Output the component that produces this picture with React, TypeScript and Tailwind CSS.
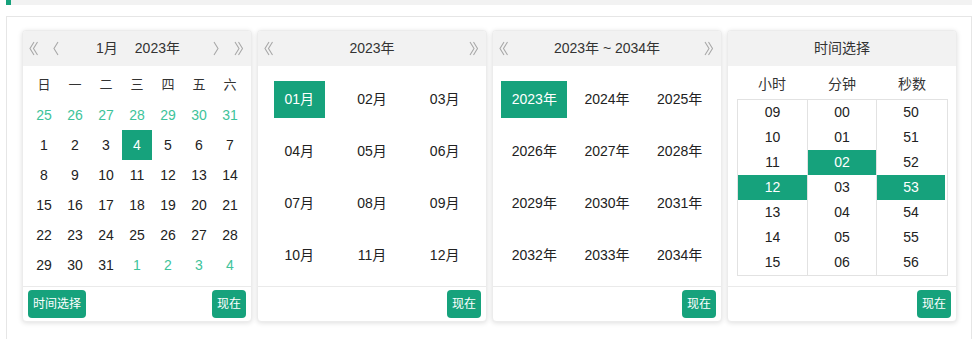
import React from "react";

const GREEN = "bg-[#16a27c]";

function Chev({ dir, double }: { dir: "l" | "r"; double?: boolean }) {
  const pts = (x: number) =>
    dir === "l" ? `${x + 4},1 ${x},7.5 ${x + 4},14` : `${x},1 ${x + 4},7.5 ${x},14`;
  return (
    <svg width={double ? 10 : 6} height="15" viewBox={double ? "0 0 10 15" : "0 0 6 15"} fill="none" stroke="#a8a8a8" strokeWidth="1.1">
      {double ? (
        <>
          <polyline points={pts(1)} />
          <polyline points={pts(4.5)} />
        </>
      ) : (
        <polyline points={pts(1)} />
      )}
    </svg>
  );
}

function Btn({ children }: { children: React.ReactNode }) {
  return (
    <div className={`${GREEN} h-[28px] px-[5px] rounded-[4px] text-white text-[12px] leading-[28px]`}>{children}</div>
  );
}

function Panel({
  header,
  children,
  footer,
}: {
  header: React.ReactNode;
  children: React.ReactNode;
  footer: React.ReactNode;
}) {
  return (
    <div className="w-[230px] h-[292px] shrink-0 bg-white rounded-[4px] border border-[#ececec] shadow-[0_1px_5px_rgba(0,0,0,0.13)] flex flex-col overflow-hidden">
      <div className="h-[35px] bg-[#f2f2f2] relative flex items-center justify-center text-[14px] text-[#333]">{header}</div>
      <div className="h-[220px]">{children}</div>
      <div className="h-[35px] border-t border-[#eaeaea] flex items-start justify-between pt-[3px] px-[5px]">{footer}</div>
    </div>
  );
}

const weekdays = ["日", "一", "二", "三", "四", "五", "六"];
const days: { n: number; other?: boolean; sel?: boolean }[] = [
  ...[25, 26, 27, 28, 29, 30, 31].map((n) => ({ n, other: true })),
  ...Array.from({ length: 31 }, (_, i) => ({ n: i + 1, sel: i + 1 === 4 })),
  ...[1, 2, 3, 4].map((n) => ({ n, other: true })),
];

function DatePanel() {
  return (
    <Panel
      header={
        <>
          <div className="absolute left-[6px] top-[10px] flex items-center gap-[14px]">
            <Chev dir="l" double />
            <Chev dir="l" />
          </div>
          <div className="flex gap-[17px] ml-[2px]">
            <span>1月</span>
            <span>2023年</span>
          </div>
          <div className="absolute right-[7px] top-[10px] flex items-center gap-[15px]">
            <Chev dir="r" />
            <Chev dir="r" double />
          </div>
        </>
      }
      footer={
        <>
          <Btn>时间选择</Btn>
          <Btn>现在</Btn>
        </>
      }
    >
      <div className="pt-[4px] flex justify-center">
        <div className="grid grid-cols-[repeat(7,31px)] text-[14px]">
          {weekdays.map((w) => (
            <div key={w} className="h-[30px] flex items-center justify-center text-[#333] text-[13px]">
              {w}
            </div>
          ))}
          {days.map((d, i) => (
            <div key={i} className="h-[30px] flex items-center justify-center">
              <span
                className={`w-[30px] h-[30px] flex items-center justify-center ${
                  d.sel ? `${GREEN} text-white` : d.other ? "text-[#3ec39a]" : "text-[#222]"
                }`}
              >
                {d.n}
              </span>
            </div>
          ))}
        </div>
      </div>
    </Panel>
  );
}

function ListPanel({
  title,
  items,
  selW,
}: {
  title: string;
  items: string[];
  selW: string;
}) {
  return (
    <Panel
      header={
        <>
          <div className="absolute left-[6px] top-[10px] flex items-center">
            <Chev dir="l" double />
          </div>
          <span>{title}</span>
          <div className="absolute right-[7px] top-[10px] flex items-center">
            <Chev dir="r" double />
          </div>
        </>
      }
      footer={
        <>
          <span />
          <Btn>现在</Btn>
        </>
      }
    >
      <div className="grid grid-cols-3 grid-rows-[repeat(4,52px)] px-[5px] pt-[7px] text-[14px] text-[#222]">
        {items.map((t, i) => (
          <div key={t} className="flex items-center justify-center">
            <span
              className={`h-[37px] flex items-center justify-center ${selW} ${i === 0 ? `${GREEN} text-white` : ""}`}
            >
              {t}
            </span>
          </div>
        ))}
      </div>
    </Panel>
  );
}

function TimeCol({ items, sel, first }: { items: string[]; sel: number; first?: boolean }) {
  return (
    <div className={`w-[69px] ${first ? "" : "border-l border-[#e2e2e2]"}`}>
      {items.map((t, i) => (
        <div
          key={t}
          className={`h-[25px] flex items-center justify-center ${i === sel ? `${GREEN} text-white` : "text-[#222]"}`}
        >
          {t}
        </div>
      ))}
    </div>
  );
}

function TimePanel() {
  return (
    <Panel
      header={<span>时间选择</span>}
      footer={
        <>
          <span />
          <Btn>现在</Btn>
        </>
      }
    >
      <div className="pt-[4px] px-[9px] text-[14px]">
        <div className="flex h-[29px] items-center text-[#333]">
          <div className="w-[70px] text-center">小时</div>
          <div className="w-[70px] text-center">分钟</div>
          <div className="w-[70px] text-center">秒数</div>
        </div>
        <div className="flex w-[211px] border border-[#e2e2e2]">
          <TimeCol first items={["09", "10", "11", "12", "13", "14", "15"]} sel={3} />
          <TimeCol items={["00", "01", "02", "03", "04", "05", "06"]} sel={2} />
          <TimeCol items={["50", "51", "52", "53", "54", "55", "56"]} sel={3} />
        </div>
      </div>
    </Panel>
  );
}

export default function App() {
  const months = ["01月", "02月", "03月", "04月", "05月", "06月", "07月", "08月", "09月", "10月", "11月", "12月"];
  const years = Array.from({ length: 12 }, (_, i) => `${2023 + i}年`);
  return (
    <div
      className="w-[975px] h-[339px] bg-white overflow-hidden"
      style={{ fontFamily: '"Liberation Sans", "Noto Sans CJK SC", sans-serif' }}
    >
      <div className="ml-[6px] w-[966px] h-[5px] bg-[#f2f2f2] border-l-[5px] border-[#16a27c]" />
      <div className="ml-[6px] mt-[11px] w-[966px] h-[340px] border border-[#e6e6e6] pl-[15px] pt-[13px]">
        <div className="flex gap-[5px]">
          <DatePanel />
          <ListPanel title="2023年" items={months} selW="w-[51px]" />
          <ListPanel title="2023年 ~ 2034年" items={years} selW="w-[66px]" />
          <TimePanel />
        </div>
      </div>
    </div>
  );
}
